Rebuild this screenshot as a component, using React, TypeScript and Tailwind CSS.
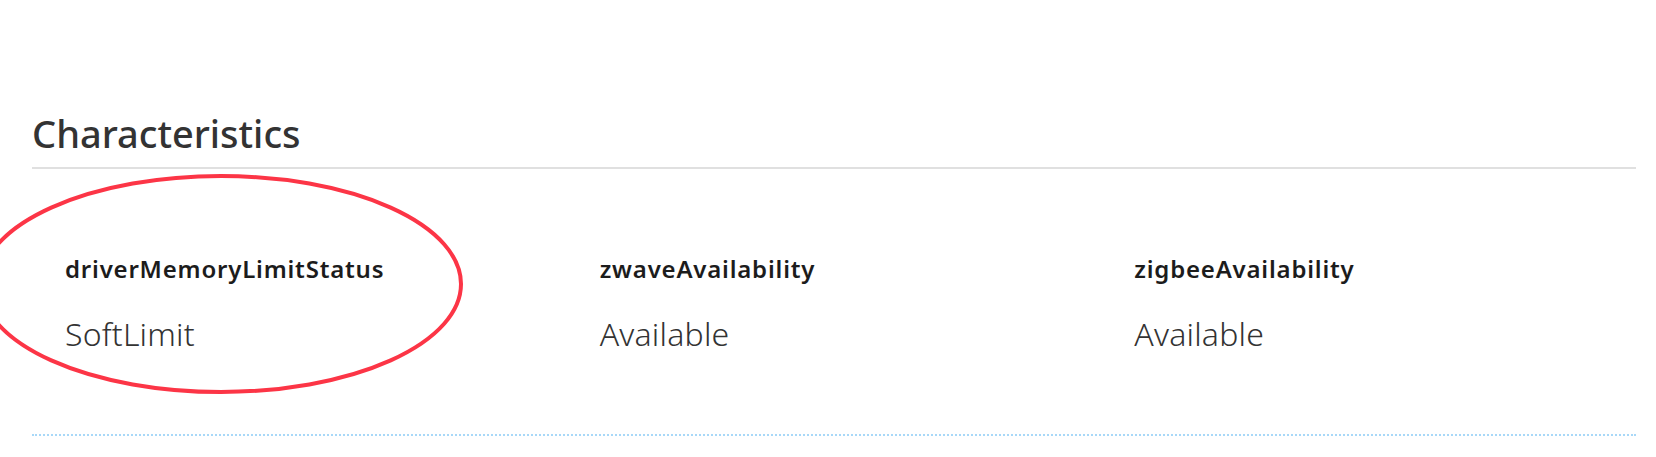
const items = [
  { name: "driverMemoryLimitStatus", value: "SoftLimit" },
  { name: "zwaveAvailability", value: "Available" },
  { name: "zigbeeAvailability", value: "Available" },
];

export default function App() {
  return (
    <div className="relative h-[457px] w-[1656px] overflow-hidden bg-white font-['Noto_Sans',sans-serif]">
      <div className="pl-[32px] pr-[20px] pt-[110px]">
        {/* Section title */}
        <h2 className="border-b-2 border-[#e0e0e0] pb-[11px] text-[38px] leading-[46px] font-medium text-[#333333]">
          Characteristics
        </h2>

        {/* Characteristic values */}
        <div className="grid grid-cols-3 border-b-2 border-dotted border-[#a8d8f8]">
          {items.map((item) => (
            <div key={item.name} className="pl-[33px] pt-[85px] pb-[80px]">
              <div className="text-[24px] leading-[30px] font-semibold tracking-[0.8px] text-[#1c1c1c]">
                {item.name}
              </div>
              <div className="mt-[30px] text-[32px] leading-[40px] font-light tracking-[0.2px] text-[#333333]">
                {item.value}
              </div>
            </div>
          ))}
        </div>
      </div>

      {/* Red annotation circle */}
      <svg
        className="pointer-events-none absolute left-0 top-0"
        width="1656"
        height="457"
        viewBox="0 0 1656 457"
      >
        <ellipse
          cx="221"
          cy="284"
          rx="240"
          ry="108"
          fill="none"
          stroke="#fc3546"
          strokeWidth="4"
        />
      </svg>
    </div>
  );
}
